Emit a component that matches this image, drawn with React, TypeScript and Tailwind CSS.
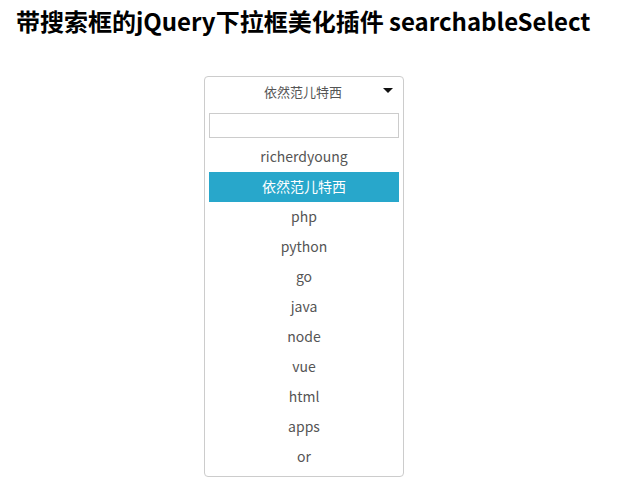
const items = ["richerdyoung", "依然范儿特西", "php", "python", "go", "java", "node", "vue", "html", "apps", "or"];

export default function App() {
  const selected = "依然范儿特西";
  return (
    <div className="h-[490px] w-[628px] bg-white font-['Microsoft_YaHei','Noto_Sans_CJK_SC',sans-serif]">
      <h1 className="pl-4 pt-[4px] text-[24px] font-bold leading-[34px] text-black">
        带搜索框的jQuery下拉框美化插件 searchableSelect
      </h1>
      <div className="ml-[204px] mt-[38px] w-[200px] rounded-[4px] border border-[#ccc] pb-[4px]">
        <div className="relative flex h-[34px] items-center justify-center pb-[4px] text-[13px] text-[#555]">
          <span className="-ml-[2px]">{selected}</span>
          <span className="absolute right-[10px] top-[11px] h-0 w-0 border-x-[5px] border-t-[5px] border-x-transparent border-t-[#111]" />
        </div>
        <div className="px-[4px] pt-[2px]">
          <div className="h-[25px] border border-[#ccc] bg-white" />
          <ul className="mt-[4px]">
            {items.map((item) => (
              <li
                key={item}
                className={
                  item === selected
                    ? "flex h-[30px] items-center justify-center pb-[2px] bg-[#28a7cb] text-[14px] text-white"
                    : "flex h-[30px] items-center justify-center pb-[2px] text-[14px] text-[#555]"
                }
              >
                {item}
              </li>
            ))}
          </ul>
        </div>
      </div>
    </div>
  );
}
